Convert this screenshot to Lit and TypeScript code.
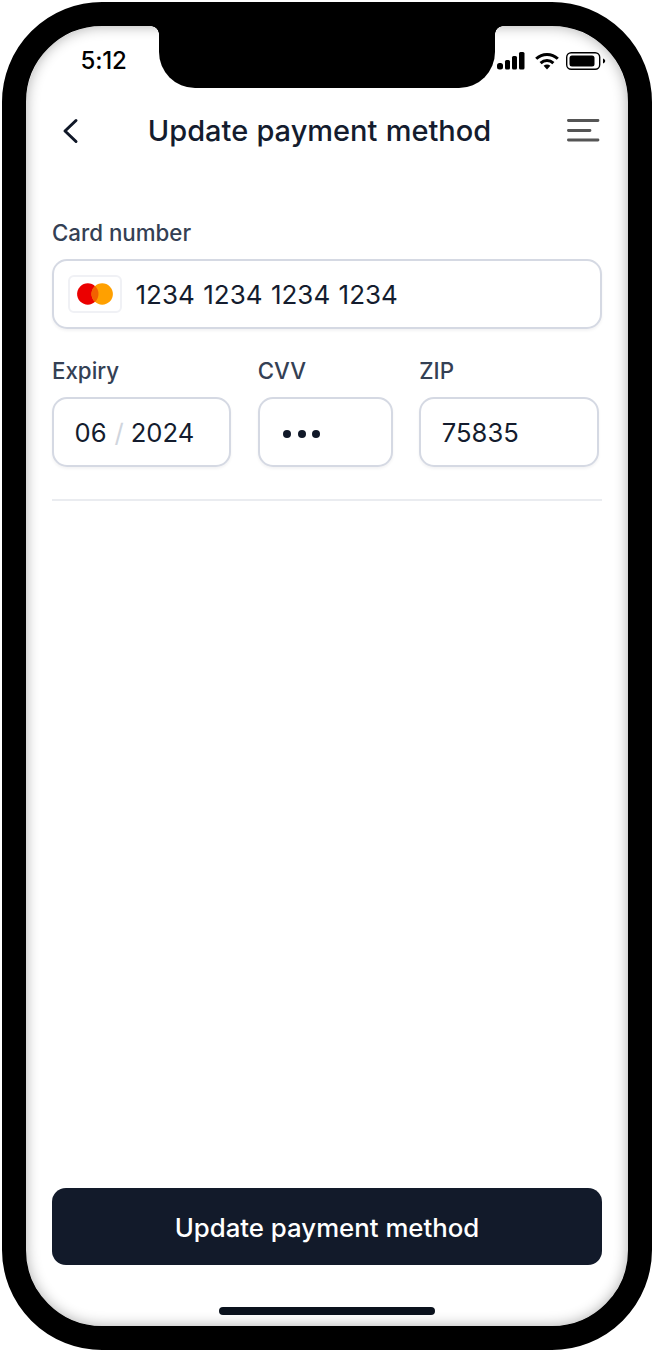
import { LitElement, html, css } from "lit";
import { customElement } from "lit/decorators.js";

@customElement("app-root")
export class AppRoot extends LitElement {
  static styles = css`
    :host { display: block; width: 654px; height: 1352px; background: #fff; font-family: "Inter", "Liberation Sans", sans-serif; color: #101828; }
    * { box-sizing: border-box; }
    .phone { width: 650px; height: 1348px; margin: 2px 0 0 2px; border: 24px solid #000; border-radius: 100px; background: #fff; overflow: hidden; }
    .screen { width: 602px; height: 1300px; border-radius: 76px; box-shadow: inset 0 0 14px rgba(0,0,0,.32); display: flex; flex-direction: column; }
    .status { display: flex; height: 62px; flex: none; }
    .side-l { width: 133px; padding: 22px 0 0 54.5px; font-size: 24px; line-height: 26px; font-weight: 500; color: #000; letter-spacing: -0.2px; }
    .notch { position: relative; width: 336px; height: 62px; background: #000; border-radius: 0 0 36px 36px; flex: none; }
    .notch::before, .notch::after { content: ""; position: absolute; top: 0; width: 8px; height: 8px; }
    .notch::before { left: -8px; background: radial-gradient(circle at 0 100%, transparent 7.5px, #000 8px); }
    .notch::after { right: -8px; background: radial-gradient(circle at 100% 100%, transparent 7.5px, #000 8px); }
    .side-r { width: 133px; padding: 26px 0 0 2px; display: flex; align-items: flex-start; gap: 10px; }
    .side-r svg { display: block; flex: none; }
    .header { display: flex; align-items: center; justify-content: space-between; height: 44px; margin: 21px 27px 0 32px; flex: none; }
    .back { width: 26px; height: 26px; display: block; }
    .title { font-size: 29px; line-height: 44px; font-weight: 470; color: #141c2e; word-spacing: 0.5px; margin-right: 12px; }
    .menu { width: 34px; height: 26px; display: block; }
    .form { padding: 0 26px; margin-top: 64px; flex: none; }
    .label { display: block; font-size: 22.3px; line-height: 32px; font-weight: 470; color: #344054; margin-bottom: 10px; }
    .input { display: flex; align-items: center; height: 70px; border: 2px solid #d5d9e3; border-radius: 15px; background: #fff; box-shadow: 0 2px 3px rgba(16,24,40,.05); font-size: 25.6px; color: #141c2e; padding: 0 20.5px; }
    .card { padding: 0 14px; gap: 13.5px; word-spacing: 1.1px; font-size: 26px; }
    .brand { width: 54px; height: 38px; border: 2px solid #f0f1f5; border-radius: 6px; background: #fff; display: flex; align-items: center; justify-content: center; flex: none; }
    .brand svg { display: block; }
    .row { display: flex; margin-top: 26px; }
    .f-exp { width: 179.3px; margin-right: 26.4px; }
    .f-cvv { width: 135.6px; margin-right: 26px; }
    .f-zip { width: 179.4px; }
    .slash { color: #d0d5dd; margin: 0 7px 0 8px; font-weight: 400; }
    .dots { display: flex; gap: 6.4px; padding-left: 3px; margin-top: 4px; }
    .dots i { display: block; width: 8px; height: 8px; border-radius: 50%; background: #101828; }
    .divider { height: 2px; background: #eaecf0; margin-top: 32px; }
    .spacer { flex: 1; }
    .submit { display: block; margin: 0 26px; width: 550px; height: 77px; border: 0; border-radius: 14px; background: #121a2a; color: #fff; font: 470 25.8px/77px "Inter", "Liberation Sans", sans-serif; text-align: center; flex: none; padding: 1px 0 0; }
    .home { width: 216px; height: 8px; border-radius: 4px; background: #0a111c; margin: 42px auto 11px; flex: none; }
  `;

  render() {
    return html`
      <div class="phone">
        <div class="screen">
          <div class="status">
            <div class="side-l">5:12</div>
            <div class="notch"></div>
            <div class="side-r">
              <svg width="28" height="18" viewBox="0 0 28 18" fill="#000">
                <rect x="0" y="11" width="6" height="6.500" rx="2.500"/>
                <rect x="8" y="8" width="5" height="9.500" rx="1.500"/>
                <rect x="15" y="4" width="5" height="13.500" rx="1.500"/>
                <rect x="22" y="0" width="5.500" height="17.500" rx="1.500"/>
              </svg>
              <svg width="24" height="18" viewBox="0 0 24 18" fill="none" stroke="#000" stroke-width="3">
                <path d="M1.200 6.800C7.200 .9 16.800 .9 22.800 6.800"/>
                <path d="M5.600 11.200C9.300 7.700 14.700 7.700 18.400 11.200"/>
                <path d="M8.600 13.800L12 17.500L15.400 13.800C13.400 12.200 10.600 12.200 8.600 13.800Z" fill="#000" stroke="none"/>
              </svg>
              <svg style="margin-left:-3px" width="40" height="18" viewBox="0 0 40 18" fill="none">
                <rect x=".7" y=".7" width="33" height="16.600" rx="4.500" stroke="#000" stroke-width="1.400"/>
                <rect x="3.500" y="3.500" width="25" height="11" rx="2.500" fill="#000"/>
                <path d="M37 6.500v5c1.300-.5 2.200-1.400 2.200-2.500S38.300 7 37 6.500Z" fill="#000"/>
              </svg>
            </div>
          </div>

          <div class="header">
            <svg class="back" viewBox="0 0 26 26" fill="none" stroke="#101828" stroke-width="3" stroke-linecap="round" stroke-linejoin="round">
              <path d="M18 2.500L7 13l11 10.500"/>
            </svg>
            <div class="title">Update payment method</div>
            <svg class="menu" viewBox="0 0 34 26" fill="none" stroke="#555" stroke-width="2.800" stroke-linecap="round">
              <path d="M1.400 2.500H31M1.400 12.500H23M1.400 22H31"/>
            </svg>
          </div>

          <div class="form">
            <label class="label">Card number</label>
            <div class="input card">
              <div class="brand">
                <svg width="36" height="22" viewBox="0 0 36 22">
                  <circle cx="10.800" cy="11" r="10.700" fill="#eb0000"/>
                  <circle cx="25.200" cy="11" r="10.700" fill="#ffa000"/>
                  <path d="M18 3.100a10.700 10.700 0 0 1 0 15.800a10.700 10.700 0 0 1 0-15.800Z" fill="#f26100"/>
                </svg>
              </div>
              <span>1234 1234 1234 1234</span>
            </div>
            <div class="row">
              <div class="f-exp">
                <label class="label">Expiry</label>
                <div class="input"><span>06</span><span class="slash">/</span><span>2024</span></div>
              </div>
              <div class="f-cvv">
                <label class="label">CVV</label>
                <div class="input"><div class="dots"><i></i><i></i><i></i></div></div>
              </div>
              <div class="f-zip">
                <label class="label">ZIP</label>
                <div class="input">75835</div>
              </div>
            </div>
            <div class="divider"></div>
          </div>

          <div class="spacer"></div>
          <button class="submit">Update payment method</button>
          <div class="home"></div>
        </div>
      </div>
    `;
  }
}
